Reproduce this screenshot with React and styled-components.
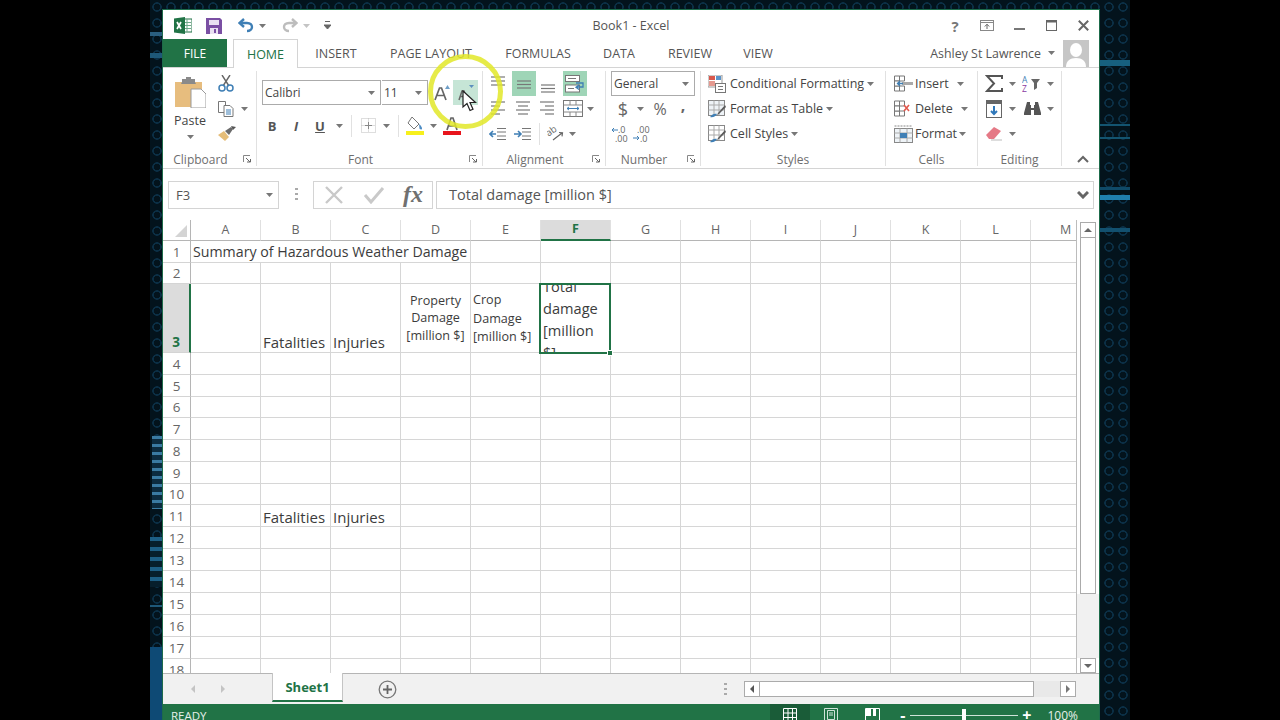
import React from "react";
import styled, { createGlobalStyle } from "styled-components";

const GlobalStyle = createGlobalStyle`
    html, body { margin: 0; padding: 0; background: #000; }
    * { box-sizing: border-box; }
`;

const GREEN = "#217346";
const UI = `"Open Sans", "Noto Sans", sans-serif`;

const Page = styled.div`
    width: 1280px;
    height: 720px;
    overflow: hidden;
    padding: 0 150px;
    background: #000;
    font-family: ${UI};
`;

const Desktop = styled.div`
    height: 720px;
    padding: 9px 30px 0 12px;
    background:
        linear-gradient(#2a5f80, #2a5f80) 0 32px / 12px 4px no-repeat,
        linear-gradient(#1e5878, #1e5878) 0 53px / 12px 5px no-repeat,
        repeating-linear-gradient(#3a7ba3 0 3px, #0c2c40 3px 8px) 2px 436px / 10px 73px no-repeat,
        repeating-linear-gradient(#1d5f85 0 4px, #071f2c 4px 10px) 0 537px / 12px 50px no-repeat,
        linear-gradient(#1e5878, #1e5878) 0 605px / 12px 2px no-repeat,
        linear-gradient(#0e4a75, #0e4a75) 0 647px / 12px 73px no-repeat,
        linear-gradient(#17607f, #17607f) 950px 60px / 30px 6px no-repeat,
        linear-gradient(#135470, #135470) 950px 124px / 30px 2px no-repeat,
        linear-gradient(#135470, #135470) 950px 137px / 30px 2px no-repeat,
        linear-gradient(#0f4a68, #0f4a68) 950px 187px / 30px 3px no-repeat,
        linear-gradient(#1f7fae, #1f7fae) 950px 195px / 30px 5px no-repeat,
        linear-gradient(#12506f, #12506f) 950px 228px / 30px 4px no-repeat,
        radial-gradient(circle at 7px 7px, transparent 3px, #0b2f45 3.5px, #0b2f45 4.5px, transparent 5px) 0 0 / 14px 16px,
        #03131c;
`;

const Window = styled.div`
    position: relative;
    display: flex;
    flex-direction: column;
    width: 938px;
    height: 730px;
    background: #fff;
    border: 1px solid #1d6b4a;
    border-bottom: 0;
`;

const TitleBar = styled.div`
    display: grid;
    grid-template-columns: 1fr auto 1fr;
    align-items: center;
    height: 29px;
    padding-top: 2px;
    flex: none;
`;

const QuickAccess = styled.div`
    display: flex;
    align-items: center;
    padding-left: 11px;
`;

const WindowTitle = styled.div`
    font-size: 12.5px;
    color: #555;
`;

const WindowButtons = styled.div`
    display: flex;
    justify-content: flex-end;
`;

const Slot = styled.div`
    display: flex;
    flex: none;
    align-items: center;
    justify-content: center;
    width: ${(p) => p.$w}px;
    height: ${(p) => p.$h || 25}px;
    margin-left: ${(p) => p.$ml || 0}px;
    background: ${(p) => p.$bg || "transparent"};
`;

const TabBar = styled.div`
    display: flex;
    align-items: stretch;
    height: 29px;
    flex: none;
    border-bottom: 1px solid #d4d4d4;
`;

const FileTab = styled.div`
    display: flex;
    align-items: center;
    justify-content: center;
    width: 64px;
    margin-right: 6px;
    background: ${GREEN};
    color: #fff;
    font-size: 12px;
`;

const Tab = styled.div`
    display: flex;
    align-items: center;
    justify-content: center;
    width: ${(p) => p.$w}px;
    font-size: 12.5px;
    color: ${(p) => (p.$active ? GREEN : "#555")};
    background: #fff;
    ${(p) => p.$active && `
        border: 1px solid #d4d4d4;
        border-bottom: 0;
        margin-bottom: -1px;
    `}
`;

const UserBox = styled.div`
    display: flex;
    align-items: center;
    margin-left: auto;
    padding-right: 10px;
    font-size: 12.4px;
    color: #555;
`;

const Avatar = styled.div`
    width: 26px;
    height: 27px;
    margin-left: 7px;
    background: #c6c6c6;
    overflow: hidden;
`;

const Ribbon = styled.div`
    display: flex;
    height: 101px;
    flex: none;
    border-bottom: 1px solid #d4d4d4;
    padding: 3px 0 2px;
    background: #fff;
`;

const GroupBox = styled.div`
    display: flex;
    flex: none;
    flex-direction: column;
    width: ${(p) => p.$w}px;
    border-right: 1px solid #e1e1e1;
`;

const GroupBody = styled.div`
    flex: 1;
    display: flex;
    flex-direction: ${(p) => (p.$row ? "row" : "column")};
    padding-left: ${(p) => p.$pad || 0}px;
`;

const GroupFoot = styled.div`
    display: flex;
    align-items: center;
    height: 19px;
    padding-top: 5px;
    font-size: 12px;
    color: #6e6e6e;
`;

const GroupLabel = styled.div`
    flex: 1;
    text-align: center;
`;

const Row = styled.div`
    display: flex;
    align-items: center;
    height: 25px;
    margin-top: ${(p) => p.$mt || 0}px;
    padding-left: ${(p) => p.$pl || 0}px;
    font-size: 12.5px;
    color: #444;
`;

const Column = styled.div`
    display: flex;
    flex-direction: column;
    align-items: center;
    width: ${(p) => p.$w}px;
`;

const PasteLabel = styled.div`
    font-size: 12.5px;
    color: #444;
    line-height: 16px;
    margin-bottom: 6px;
`;

const ComboBox = styled.div`
    display: flex;
    align-items: center;
    justify-content: space-between;
    width: ${(p) => p.$w}px;
    height: 25px;
    margin-left: ${(p) => p.$ml || 0}px;
    padding: 0 5px 0 2px;
    border: 1px solid #ababab;
    ${(p) => p.$joined && "border-left: 0;"}
    font-size: 12px;
    color: #444;
`;

const Sep = styled.div`
    width: 1px;
    height: 22px;
    background: #e1e1e1;
`;

const RowText = styled.span`
    margin-left: ${(p) => p.$ml || 4}px;
    white-space: nowrap;
`;

const FormulaBar = styled.div`
    display: flex;
    align-items: center;
    height: 51px;
    flex: none;
    padding-left: 5px;
`;

const NameBox = styled.div`
    display: flex;
    align-items: center;
    justify-content: space-between;
    width: 111px;
    height: 28px;
    padding: 0 5px 0 7px;
    border: 1px solid #d4d4d4;
    font-size: 13px;
    color: #555;
`;

const DotsSlot = styled.div`
    display: flex;
    justify-content: center;
    width: 34px;
`;

const FxBox = styled.div`
    display: flex;
    align-items: center;
    width: 120px;
    height: 28px;
    border: 1px solid #d4d4d4;
`;

const FormulaInput = styled.div`
    display: flex;
    align-items: center;
    justify-content: space-between;
    width: 658px;
    height: 28px;
    margin-left: 3px;
    padding: 0 2px 0 12px;
    border: 1px solid #d4d4d4;
    font-size: 14.5px;
    color: #555;
`;

const FxText = styled.span`
    font-family: "Liberation Serif", serif;
    font-style: italic;
    font-weight: 700;
    font-size: 24px;
    color: #707070;
`;

const WorkArea = styled.div`
    display: flex;
    height: 453px;
    flex: none;
`;

const Sheet = styled.div`
    display: grid;
    grid-template-columns: 28px repeat(13, 70px);
    grid-template-rows: 21px ${(p) => p.$rows};
    width: 914px;
    height: 453px;
    overflow: hidden;
    border-right: 1px solid #bcbcbc;
`;

const Corner = styled.div`
    display: flex;
    align-items: flex-end;
    justify-content: flex-end;
    padding: 0 3px 3px 0;
    border-right: 1px solid #b5b5b5;
    border-bottom: 1px solid #b5b5b5;
`;

const ColHead = styled.div`
    display: flex;
    align-items: center;
    justify-content: center;
    padding-bottom: 2px;
    font-size: 12.5px;
    color: ${(p) => (p.$on ? GREEN : "#666")};
    font-weight: ${(p) => (p.$on ? 700 : 400)};
    background: ${(p) => (p.$on ? "#dcdcdc" : "#fff")};
    border-right: 1px solid #e0e0e0;
    border-bottom: ${(p) => (p.$on ? `2px solid ${GREEN}` : "1px solid #b5b5b5")};
`;

const RowHead = styled.div`
    display: flex;
    align-items: ${(p) => (p.$on ? "flex-end" : "center")};
    justify-content: center;
    padding-bottom: ${(p) => (p.$on ? 1 : 0)}px;
    font-size: 13.5px;
    color: ${(p) => (p.$on ? GREEN : "#666")};
    font-weight: ${(p) => (p.$on ? 700 : 400)};
    background: ${(p) => (p.$on ? "#dcdcdc" : "#fff")};
    border-right: ${(p) => (p.$on ? `2px solid ${GREEN}` : "1px solid #b5b5b5")};
    border-bottom: 1px solid #d4d4d4;
`;

const Cell = styled.div`
    position: relative;
    display: flex;
    min-width: 0;
    align-items: ${(p) => p.$v || "flex-end"};
    padding: 0 2px ${(p) => p.$pb || 0}px;
    border-right: ${(p) => (p.$over ? "0" : "1px solid #d6d6d6")};
    border-bottom: 1px solid #d6d6d6;
    font-size: ${(p) => p.$s || 15}px;
    line-height: 18px;
    color: #3c3c3c;
    white-space: nowrap;
    z-index: ${(p) => (p.$top ? 2 : "auto")};
`;

const SmallText = styled.div`
    width: 100%;
    font-size: 12.6px;
    line-height: ${(p) => p.$lh}px;
    text-align: ${(p) => p.$align || "left"};
    padding-top: ${(p) => p.$pt || 0}px;
`;

const Selection = styled.div`
    position: absolute;
    inset: -1px -1px -2px -2px;
    border: 2px solid ${GREEN};
    background: #fff;
    overflow: hidden;
    display: flex;
    align-items: center;
    padding-left: 2px;
    font-size: 14.6px;
    line-height: 22px;
    white-space: normal;
`;

const FillHandle = styled.div`
    position: absolute;
    right: -3px;
    bottom: -4px;
    width: 6px;
    height: 6px;
    background: ${GREEN};
    border: 1px solid #fff;
`;

const VScroll = styled.div`
    display: flex;
    flex-direction: column;
    flex: 1;
    padding: 2px 3px 0 3px;
    background: #fff;
`;

const ScrollBtn = styled.div`
    display: flex;
    align-items: center;
    justify-content: center;
    flex: none;
    width: ${(p) => p.$w || 16}px;
    height: ${(p) => p.$h || 16}px;
    background: #fff;
    border: 1px solid #ababab;
`;

const VThumb = styled.div`
    width: 16px;
    height: 356px;
    flex: none;
    background: #fff;
    border: 1px solid #ababab;
    border-top: 0;
`;

const VTrack = styled.div`
    flex: 1;
    margin: 0 -3px;
    background: #f1f1f1;
`;

const HTrack = styled.div`
    flex: 1;
`;

const SheetBar = styled.div`
    display: flex;
    align-items: center;
    height: 31px;
    flex: none;
    background: #f1f1f1;
    border-top: 1px solid #b5b5b5;
    padding-left: 15px;
`;

const SheetTab = styled.div`
    display: flex;
    align-items: center;
    justify-content: center;
    align-self: flex-start;
    width: 71px;
    height: 29px;
    margin-top: -1px;
    margin-left: 34px;
    background: #fff;
    border: 1px solid #c4c4c4;
    border-top: 0;
    border-bottom: 2px solid ${GREEN};
    font-size: 13px;
    font-weight: 700;
    color: ${GREEN};
`;

const HScroll = styled.div`
    display: flex;
    width: 332px;
    height: 16px;
    margin-left: 17px;
    background: #e9e9e9;
`;

const HThumb = styled.div`
    width: 274px;
    background: #fff;
    border: 1px solid #ababab;
    border-left: 0;
`;

const StatusBar = styled.div`
    display: flex;
    align-items: center;
    height: 22px;
    flex: none;
    background: ${GREEN};
    color: #e6f0ea;
    font-size: 11.5px;
    padding-left: 8px;
`;

const StatusRight = styled.div`
    display: flex;
    align-items: center;
    margin-left: auto;
    padding-right: 21px;
`;

const ViewButton = styled.div`
    display: flex;
    align-items: center;
    justify-content: center;
    width: ${(p) => p.$w}px;
    height: 22px;
    background: ${(p) => (p.$on ? "#1a5c38" : "transparent")};
`;

const ZoomTrack = styled.div`
    position: relative;
    width: 108px;
    height: 1px;
    background: #cfe3d8;
`;

const ZoomThumb = styled.div`
    position: absolute;
    left: 52px;
    top: -6px;
    width: 4px;
    height: 13px;
    background: #fff;
`;

const ZoomText = styled.span`
    margin-left: 11px;
    font-size: 12px;
`;

const ZoomSign = styled.span`
    font-size: 16px;
    font-weight: 700;
    line-height: 16px;
    color: #fff;
    margin-left: ${(p) => p.$ml}px;
    margin-right: ${(p) => p.$mr}px;
`;

const HelpGlyph = styled.span`
    font-size: 15px;
    font-weight: 700;
    color: #777;
`;

const BoldLetter = styled.span`
    font-size: 13px;
    font-weight: 700;
    color: #555;
    font-style: ${(p) => (p.$i ? "italic" : "normal")};
    text-decoration: ${(p) => (p.$u ? "underline" : "none")};
`;

const MoneyText = styled.span`
    font-size: ${(p) => p.$s || 16}px;
    line-height: 16px;
    color: #666;
    font-weight: ${(p) => p.$w || 400};
    margin-bottom: ${(p) => p.$up || 0}px;
`;

const Highlighter = styled.div`
    position: absolute;
    left: 265px;
    top: 44px;
    width: 75px;
    height: 75px;
    border: 5px solid rgba(226, 232, 40, 0.85);
    border-radius: 50%;
    pointer-events: none;
`;

const Pointer = styled.svg`
    position: absolute;
    left: 299px;
    top: 80px;
`;

const Ico = styled.svg`
    display: block;
    flex: none;
    margin-left: ${(p) => p.$ml || 0}px;
    transform: ${(p) => p.$tf || "none"};
`;

const Caret = ({ color = "#777", ml = 0 }) => (
    <Ico width="7" height="4" viewBox="0 0 7 4" $ml={ml}>
        <path d="M0 0h7L3.500 4z" fill={color} />
    </Ico>
);

const Launcher = () => (
    <Ico width="8" height="8" viewBox="0 0 8 8">
        <path d="M.5 7V.5H7" fill="none" stroke="#888" />
        <path d="M3 3l4 4M4 7h3.500V4" fill="none" stroke="#666" />
    </Ico>
);

const ExcelLogo = () => (
    <Ico width="18" height="17" viewBox="0 0 18 17">
        <rect x="8" y="2" width="10" height="13" fill="#fff" stroke="#217346" />
        <path d="M10 5.500h7M10 8.500h7M10 11.500h7M13 2v13" stroke="#6fa98a" />
        <path d="M0 1.500l11-1.500v17l-11-1.500z" fill="#217346" />
        <path d="M3 5l4 7M7 5l-4 7" stroke="#fff" strokeWidth="1.700" />
    </Ico>
);

const SaveIcon = () => (
    <Ico width="16" height="16" viewBox="0 0 16 16">
        <path d="M0 0h14l2 2v14H0z" fill="#7a4fa3" />
        <rect x="3" y="2" width="10" height="5" fill="#e9e1f1" />
        <rect x="4" y="10" width="8" height="6" fill="#e9e1f1" />
        <rect x="8" y="11" width="2" height="4" fill="#7a4fa3" />
    </Ico>
);

const UndoIcon = ({ color = "#3f7fb5", flip }) => (
    <Ico width="16" height="15" viewBox="0 0 16 15" $tf={flip ? "scaleX(-1)" : undefined}>
        <path d="M6 1L1.500 5 6 9" fill="none" stroke={color} strokeWidth="2.400" />
        <path d="M2 5h7c3.500 0 5 2 5 4s-2 4-5 4" fill="none" stroke={color} strokeWidth="2.400" />
    </Ico>
);

const CustomizeIcon = () => (
    <Ico width="7" height="9" viewBox="0 0 7 9">
        <path d="M1 .5h5M0 4h7L3.500 8z" stroke="#666" fill="#666" />
    </Ico>
);

const DisplayIcon = () => (
    <Ico width="14" height="11" viewBox="0 0 14 11">
        <rect x=".5" y=".5" width="13" height="10" fill="none" stroke="#888" />
        <path d="M1 2.500h12" stroke="#888" />
        <path d="M7 9V4.500M4.800 6.500L7 4.200l2.200 2.300" fill="none" stroke="#666" />
    </Ico>
);

const MinIcon = () => (
    <Ico width="11" height="11" viewBox="0 0 11 11">
        <rect y="8" width="11" height="2" fill="#777" />
    </Ico>
);

const MaxIcon = () => (
    <Ico width="11" height="11" viewBox="0 0 11 11">
        <rect x=".5" y=".5" width="10" height="10" fill="none" stroke="#666" />
        <rect width="11" height="2.500" fill="#666" />
    </Ico>
);

const CloseIcon = () => (
    <Ico width="11" height="11" viewBox="0 0 11 11">
        <path d="M.8.8l9.400 9.400M10.200.8L.8 10.200" stroke="#666" strokeWidth="2" />
    </Ico>
);

const AvatarFigure = () => (
    <Ico width="26" height="27" viewBox="0 0 26 27">
        <ellipse cx="13" cy="10" rx="6" ry="7" fill="#fff" />
        <path d="M3 27c0-6 4-9 10-9s10 3 10 9z" fill="#fff" />
    </Ico>
);

const PasteIcon = () => (
    <Ico width="31" height="31" viewBox="0 0 31 31">
        <rect x="0" y="5" width="27" height="25" fill="#e7bd7e" />
        <path d="M7 5V2h4V0h5v2h4v3l1 2H6z" fill="#8a8a8a" />
        <path d="M16 12h10l5 5v14H16z" fill="#fff" stroke="#9a9a9a" />
    </Ico>
);

const CutIcon = () => (
    <Ico width="16" height="17" viewBox="0 0 16 17">
        <path d="M4 0l7 11M12 0L5 11" stroke="#666" strokeWidth="1.400" />
        <circle cx="4" cy="13" r="3" fill="none" stroke="#3f7fb5" strokeWidth="1.500" />
        <circle cx="12" cy="13" r="3" fill="none" stroke="#3f7fb5" strokeWidth="1.500" />
    </Ico>
);

const CopyIcon = () => (
    <Ico width="16" height="16" viewBox="0 0 16 16">
        <path d="M.5.5h7v11h-7z" fill="#fff" stroke="#777" />
        <path d="M6 4.500h6l3 3v8H6z" fill="#fff" stroke="#777" />
        <path d="M8 9h5M8 11h5M8 13h5" stroke="#3f7fb5" />
    </Ico>
);

const PainterIcon = () => (
    <Ico width="18" height="15" viewBox="0 0 18 15">
        <path d="M0 9l6-4 5 6-4 4z" fill="#e5bd78" />
        <path d="M7 5l6-4 2 2-4 6z" fill="#6b6b6b" />
        <path d="M13 0l5 1-3 3z" fill="#555" />
    </Ico>
);

const GrowFont = () => (
    <Ico width="16" height="16" viewBox="0 0 16 16">
        <path d="M1 15L5.500 3h2L12 15M3 10.500h7" fill="none" stroke="#666" strokeWidth="1.700" />
        <path d="M11 4h5L13.500 0z" fill="#6f9fc8" />
    </Ico>
);

const ShrinkFont = () => (
    <Ico width="20" height="18" viewBox="0 0 20 18">
        <path d="M13 1h5l-2.500 3z" fill="#5c8fbe" />
        <path d="M3 16l3-9h2l3 9M4.500 12.500h5" fill="none" stroke="#666" strokeWidth="1.500" />
    </Ico>
);

const BorderIcon = () => (
    <Ico width="15" height="15" viewBox="0 0 15 15">
        <path d="M.5.5h14v14H.5zM7.500.5v14M.5 7.500h14" fill="none" stroke="#bdbdbd" strokeDasharray="1 1" />
        <path d="M4 7.500h7M7.500 4v7" stroke="#888" />
    </Ico>
);

const FillIcon = () => (
    <Ico width="18" height="19" viewBox="0 0 18 19">
        <path d="M6 1l7 7-5 5-6-6z" fill="#fff" stroke="#777" />
        <path d="M13 8c2 2 3 3 3 4.500s-2 1-2.500 0z" fill="#4d8cc4" />
        <rect y="15" width="18" height="4" fill="#f7f01c" />
    </Ico>
);

const ColorIcon = () => (
    <Ico width="18" height="19" viewBox="0 0 18 19">
        <path d="M4 14L8 2h2l4 12M5.500 10h7" fill="none" stroke="#666" strokeWidth="1.700" />
        <rect y="15" width="18" height="4" fill="#e8141c" />
    </Ico>
);

const Lines = ({ ys, xs, w = 16, h = 18 }) => (
    <Ico width={w} height={h} viewBox={`0 0 ${w} ${h}`}>
        {ys.map((y, i) => (
            <path key={i} d={`M${xs ? xs[i][0] : 1} ${y}H${xs ? xs[i][1] : w - 1}`} stroke="#777" strokeWidth="1.200" />
        ))}
    </Ico>
);

const WrapIcon = () => (
    <Ico width="20" height="18" viewBox="0 0 20 18">
        <rect x=".5" y=".5" width="14" height="6" fill="#fff" stroke="#777" />
        <rect x=".5" y="10" width="14" height="7" fill="#fff" stroke="#777" />
        <path d="M3 3.500h8M3 13.500h6" stroke="#777" />
        <path d="M11 8h7v4h-6M14 10l-3 2.300 3 2.200" fill="none" stroke="#3f7fb5" strokeWidth="1.300" />
    </Ico>
);

const MergeIcon = () => (
    <Ico width="20" height="17" viewBox="0 0 20 17">
        <rect x=".5" y=".5" width="19" height="16" fill="#fff" stroke="#777" />
        <path d="M.5 5h19M.5 12h19M7 .5V5M13 .5V5M7 12v4.500M13 12v4.500" stroke="#888" />
        <path d="M4 8.500h12M6 7L4 8.500 6 10M14 7l2 1.500L14 10" fill="none" stroke="#3f7fb5" />
    </Ico>
);

const IndentIcon = ({ flip }) => (
    <Ico width="18" height="14" viewBox="0 0 18 14">
        <path d="M8 1.500h9M8 5h9M8 9h9M8 12.500h9" stroke="#777" />
        {flip ? (
            <path d="M0 7h7M4 4l3 3-3 3" fill="none" stroke="#3f7fb5" strokeWidth="1.600" />
        ) : (
            <path d="M7 7H1M4 4L1 7l3 3" fill="none" stroke="#3f7fb5" strokeWidth="1.600" />
        )}
    </Ico>
);

const OrientIcon = () => (
    <Ico width="18" height="17" viewBox="0 0 18 17">
        <text x="0" y="9" fontSize="9.500" fill="#666" fontFamily="Open Sans" transform="rotate(-35 5 8)">ab</text>
        <path d="M6 15l9-7M12 7.500l3.500.3-.5 3.500" fill="none" stroke="#666" strokeWidth="1.200" />
    </Ico>
);

const DecimalIcon = ({ dir }) => (
    <Ico width="18" height="18" viewBox="0 0 18 18">
        <text x={dir ? 5 : 6} y="8" fontSize="9" fill="#666" fontFamily="Open Sans">{dir ? ".00" : ".0"}</text>
        <text x={dir ? 8 : 3} y="16.500" fontSize="9" fill="#666" fontFamily="Open Sans">{dir ? ".0" : ".00"}</text>
        <path d={dir ? "M1 13h6M5 11l2 2-2 2" : "M0 5h6M2 3L0 5l2 2"} fill="none" stroke="#3f7fb5" />
    </Ico>
);

const CondIcon = () => (
    <Ico width="18" height="18" viewBox="0 0 18 18">
        <rect x="0" y="0" width="14" height="12" fill="#fff" stroke="#999" />
        <rect x="1" y="1" width="6" height="4" fill="#d8584c" />
        <rect x="8" y="1" width="5" height="4" fill="#5b93c8" />
        <rect x="1" y="6" width="6" height="5" fill="#e59a90" />
        <rect x="7.500" y="8.500" width="10" height="9" fill="#fff" stroke="#777" />
        <path d="M10 11.500h5M10 14.500h5" stroke="#777" />
    </Ico>
);

const TableIcon = ({ solid }) => (
    <Ico width="18" height="18" viewBox="0 0 18 18">
        <rect x=".5" y=".5" width="16" height="15" fill={solid ? "#fff" : "#eef3f7"} stroke="#888" />
        <path d="M.5 5h16M.5 10h16M6 .5v15M11 .5v15" stroke="#aaa" />
        <path d="M17 5l-7 8-1 2 2-1 7-7z" fill="#5b5b5b" />
        <path d="M2 17c2-3 5-4 7-3-1 2-4 4-7 3z" fill="#3f7fb5" />
    </Ico>
);

const CellsIcon = ({ kind }) => (
    <Ico width="20" height="18" viewBox="0 0 20 18">
        <path d="M.5 1h5v5h-5zM5.500 1h5v5h-5zM.5 11h5v5h-5zM5.500 11h5v5h-5z" fill="#fff" stroke="#777" />
        <path d="M.5 6h5v5h-5z" fill="#fff" stroke="#777" />
        {kind === "insert" ? (
            <g>
                <path d="M8 8.500h11" stroke="#aaa" strokeWidth="3" />
                <path d="M9 8.500H4M6 6L3.500 8.500 6 11" fill="none" stroke="#3f7fb5" strokeWidth="1.300" />
            </g>
        ) : (
            <path d="M10 5l5 6M15 5l-5 6" stroke="#e2574c" strokeWidth="1.600" />
        )}
    </Ico>
);

const FormatIcon = () => (
    <Ico width="20" height="18" viewBox="0 0 20 18">
        <rect x=".5" y="3.500" width="18" height="14" fill="#eef3f7" stroke="#888" />
        <path d="M.5 1h18" stroke="#888" strokeDasharray="2 1" />
        <path d="M6 3.500v14M13 3.500v14M.5 8h18M.5 13h18" stroke="#aaa" />
        <rect x="6" y="8" width="7" height="5" fill="#3f7fb5" />
    </Ico>
);

const SigmaIcon = () => (
    <Ico width="18" height="17" viewBox="0 0 18 17">
        <path d="M17 4V1H2l7 7.500L2 16h15v-3" fill="none" stroke="#555" strokeWidth="2" />
    </Ico>
);

const SortIcon = () => (
    <Ico width="20" height="17" viewBox="0 0 20 17">
        <text x="0" y="7.500" fontSize="8.500" fill="#3f7fb5" fontFamily="Open Sans">A</text>
        <text x="0" y="16.500" fontSize="8.500" fill="#8a3aa0" fontFamily="Open Sans">Z</text>
        <path d="M9 4h9l-3 4v5l-3 2V8z" fill="#666" />
    </Ico>
);

const FillDown = () => (
    <Ico width="16" height="18" viewBox="0 0 16 18">
        <rect x=".5" y=".5" width="15" height="17" fill="#fff" stroke="#666" />
        <rect width="16" height="4" fill="#666" />
        <path d="M8 6v8M5 11l3 3 3-3" fill="none" stroke="#2f78ba" strokeWidth="2" />
    </Ico>
);

const FindIcon = () => (
    <Ico width="17" height="15" viewBox="0 0 17 15">
        <path d="M3 1h3v3h1v3h3V4h1V1h3l3 11v2h-7V9H7v5H0v-2z" fill="#555" />
    </Ico>
);

const EraserIcon = () => (
    <Ico width="16" height="15" viewBox="0 0 16 15">
        <path d="M0 9l8-8 7 4-7 8H3z" fill="#e57986" />
        <path d="M5 14h11" stroke="#bbb" />
    </Ico>
);

const Chevron = ({ dir = "up" }) => (
    <Ico width="12" height="8" viewBox="0 0 12 8" $tf={dir === "down" ? "rotate(180deg)" : undefined}>
        <path d="M1 7l5-5 5 5" fill="none" stroke="#666" strokeWidth={dir === "down" ? 3 : 2} />
    </Ico>
);

const Arrow = ({ dir, color = "#666", s = 8 }) => {
    const d = {
        up: "M0 6h8L4 2z",
        down: "M0 2h8L4 6z",
        left: "M6 0v8L2 4z",
        right: "M2 0v8l4-4z",
    }[dir];
    return (
        <Ico width={s} height={s} viewBox="0 0 8 8">
            <path d={d} fill={color} />
        </Ico>
    );
};

const DotsIcon = () => (
    <Ico width="3" height="13" viewBox="0 0 3 13">
        <path d="M0 0h3v2H0zM0 5h3v2H0zM0 10h3v2H0z" fill="#aaa" />
    </Ico>
);

const CancelIcon = () => (
    <Ico width="20" height="20" viewBox="0 0 20 20">
        <path d="M2 2l16 16M18 2L2 18" stroke="#c9c9c9" strokeWidth="2.400" />
    </Ico>
);

const CheckIcon = () => (
    <Ico width="22" height="18" viewBox="0 0 22 18">
        <path d="M2 9l6 7L20 2" fill="none" stroke="#c9c9c9" strokeWidth="3" />
    </Ico>
);

const CornerMark = () => (
    <Ico width="12" height="12" viewBox="0 0 12 12">
        <path d="M12 0v12H0z" fill="#d4d4d4" />
    </Ico>
);

const PlusCircle = () => (
    <Ico width="19" height="19" viewBox="0 0 19 19">
        <circle cx="9.500" cy="9.500" r="8.300" fill="none" stroke="#777" strokeWidth="1.300" />
        <path d="M5 9.500h9M9.500 5v9" stroke="#666" strokeWidth="1.800" />
    </Ico>
);

const ViewGrid = () => (
    <Ico width="14" height="14" viewBox="0 0 14 14">
        <path d="M.5.5h13v13H.5zM5 .5v13M9.500 .5v13M.5 5h13M.5 9.500h13" fill="none" stroke="#fff" />
    </Ico>
);

const ViewPage = () => (
    <Ico width="14" height="14" viewBox="0 0 14 14">
        <path d="M.5.5h13v13H.5z" fill="none" stroke="#cfe3d8" />
        <path d="M3.500 2.500h7v9h-7zM5 5h4M5 7h4" fill="none" stroke="#cfe3d8" />
    </Ico>
);

const ViewBreak = () => (
    <Ico width="15" height="14" viewBox="0 0 15 14">
        <path d="M.5.5h14v13H.5z" fill="none" stroke="#fff" />
        <rect x="1" y="1" width="5" height="7" fill="#fff" />
        <rect x="8" y="1" width="3" height="7" fill="#fff" />
    </Ico>
);

const Group = ({ w, label, launcher, pad, row, children }) => (
    <GroupBox $w={w}>
        <GroupBody $pad={pad} $row={row}>{children}</GroupBody>
        <GroupFoot>
            <GroupLabel>{label}</GroupLabel>
            {launcher && <Slot $w={18} $h={14}><Launcher /></Slot>}
        </GroupFoot>
    </GroupBox>
);

const TABS = [
    ["HOME", 65, true],
    ["INSERT", 76],
    ["PAGE LAYOUT", 114],
    ["FORMULAS", 100],
    ["DATA", 62],
    ["REVIEW", 80],
    ["VIEW", 56],
];

const COLUMNS = "ABCDEFGHIJKLM".split("");
const ROW_HEIGHTS = [22, 21, 69, 22, 22, 21, 22, 22, 22, 21, 22, 22, 22, 22, 22, 22, 22, 22];

const renderCell = (col, row) => {
    const id = col + row;
    switch (id) {
        case "A1":
            return <Cell key={id} $over $s={14.2} $pb={1}>Summary of Hazardous Weather Damage</Cell>;
        case "B1":
        case "C1":
            return <Cell key={id} $over />;
        case "B3":
            return <Cell key={id} $pb={1}>Fatalities</Cell>;
        case "C3":
            return <Cell key={id} $pb={1}>Injuries</Cell>;
        case "B11":
            return <Cell key={id}>Fatalities</Cell>;
        case "C11":
            return <Cell key={id}>Injuries</Cell>;
        case "D3":
            return (
                <Cell key={id} $v="center">
                    <SmallText $align="center" $lh={17.5}>Property<br />Damage<br />[million $]</SmallText>
                </Cell>
            );
        case "E3":
            return (
                <Cell key={id} $v="center">
                    <SmallText $lh={18.5} $pt={2}>Crop<br />Damage<br />[million $]</SmallText>
                </Cell>
            );
        case "F3":
            return (
                <Cell key={id} $top>
                    <Selection>Total damage [million $]</Selection>
                    <FillHandle />
                </Cell>
            );
        default:
            return <Cell key={id} />;
    }
};

const App = () => (
    <Page>
        <GlobalStyle />
        <Desktop>
            <Window>
                <TitleBar>
                    <QuickAccess>
                        <ExcelLogo />
                        <Slot $w={16} $ml={14}><SaveIcon /></Slot>
                        <Slot $w={16} $ml={16}><UndoIcon /></Slot>
                        <Slot $w={12} $ml={2}><Caret /></Slot>
                        <Slot $w={16} $ml={14}><UndoIcon color="#bdbdbd" flip /></Slot>
                        <Slot $w={12} $ml={2}><Caret color="#c4c4c4" /></Slot>
                        <Slot $w={8} $ml={11}><CustomizeIcon /></Slot>
                    </QuickAccess>
                    <WindowTitle>Book1 - Excel</WindowTitle>
                    <WindowButtons>
                        <Slot $w={32}><HelpGlyph>?</HelpGlyph></Slot>
                        <Slot $w={32}><DisplayIcon /></Slot>
                        <Slot $w={32}><MinIcon /></Slot>
                        <Slot $w={32}><MaxIcon /></Slot>
                        <Slot $w={32}><CloseIcon /></Slot>
                    </WindowButtons>
                </TitleBar>
                <TabBar>
                    <FileTab>FILE</FileTab>
                    {TABS.map(([name, w, active]) => (
                        <Tab key={name} $w={w} $active={active}>{name}</Tab>
                    ))}
                    <UserBox>
                        Ashley St Lawrence
                        <Slot $w={10} $ml={5}><Caret /></Slot>
                        <Avatar><AvatarFigure /></Avatar>
                    </UserBox>
                </TabBar>
                <Ribbon>
                    <Group w={94} label="Clipboard" launcher row>
                        <Column $w={54}>
                            <Slot $w={54} $h={42}><PasteIcon /></Slot>
                            <PasteLabel>Paste</PasteLabel>
                            <Caret />
                        </Column>
                        <div>
                            <Row><Slot $w={18}><CutIcon /></Slot></Row>
                            <Row><Slot $w={18}><CopyIcon /></Slot><Slot $w={8} $ml={5}><Caret /></Slot></Row>
                            <Row><Slot $w={20}><PainterIcon /></Slot></Row>
                        </div>
                    </Group>
                    <Group w={226} label="Font" launcher>
                        <Row $mt={9}>
                            <ComboBox $w={119} $ml={5}>Calibri<Caret /></ComboBox>
                            <ComboBox $w={46} $joined $ml={1}>11<Caret /></ComboBox>
                            <Slot $w={20} $ml={4}><GrowFont /></Slot>
                            <Slot $w={25} $ml={1} $bg="#c6e5d6"><ShrinkFont /></Slot>
                        </Row>
                        <Row $mt={8} $pl={3}>
                            <Slot $w={24}><BoldLetter>B</BoldLetter></Slot>
                            <Slot $w={24}><BoldLetter $i>I</BoldLetter></Slot>
                            <Slot $w={24}><BoldLetter $u>U</BoldLetter></Slot>
                            <Slot $w={14}><Caret /></Slot>
                            <Slot $w={10}><Sep /></Slot>
                            <Slot $w={24}><BorderIcon /></Slot>
                            <Slot $w={12}><Caret /></Slot>
                            <Slot $w={12}><Sep /></Slot>
                            <Slot $w={22}><FillIcon /></Slot>
                            <Slot $w={14}><Caret /></Slot>
                            <Slot $w={24}><ColorIcon /></Slot>
                        </Row>
                    </Group>
                    <Group w={123} label="Alignment" launcher pad={3}>
                        <Row>
                            <Slot $w={24}><Lines ys={[2, 6, 10]} /></Slot>
                            <Slot $w={24} $ml={2} $bg="#9fd5b7"><Lines ys={[6, 9.5, 13]} /></Slot>
                            <Slot $w={24}><Lines ys={[11, 14.5, 18]} h={19} /></Slot>
                            <Slot $w={24} $ml={3} $bg="#9fd5b7"><WrapIcon /></Slot>
                        </Row>
                        <Row>
                            <Slot $w={24}><Lines ys={[2, 6, 10, 14]} xs={[[1, 15], [1, 10], [1, 15], [1, 10]]} /></Slot>
                            <Slot $w={25}><Lines ys={[2, 6, 10, 14]} xs={[[1, 15], [3, 13], [1, 15], [3, 13]]} /></Slot>
                            <Slot $w={24}><Lines ys={[2, 6, 10, 14]} xs={[[1, 15], [6, 15], [1, 15], [6, 15]]} /></Slot>
                            <Slot $w={24} $ml={2}><MergeIcon /></Slot>
                            <Slot $w={10}><Caret /></Slot>
                        </Row>
                        <Row>
                            <Slot $w={24}><IndentIcon /></Slot>
                            <Slot $w={25}><IndentIcon flip /></Slot>
                            <Slot $w={8}><Sep /></Slot>
                            <Slot $w={26}><OrientIcon /></Slot>
                            <Slot $w={6}><Caret /></Slot>
                        </Row>
                    </Group>
                    <Group w={95} label="Number" launcher pad={5}>
                        <Row>
                            <ComboBox $w={84}>General<Caret /></ComboBox>
                        </Row>
                        <Row>
                            <Slot $w={24}><MoneyText $s={18}>$</MoneyText></Slot>
                            <Slot $w={10}><Caret /></Slot>
                            <Slot $w={30}><MoneyText>%</MoneyText></Slot>
                            <Slot $w={16}><MoneyText $w={700} $up={8}>,</MoneyText></Slot>
                        </Row>
                        <Row>
                            <Slot $w={20}><DecimalIcon /></Slot>
                            <Slot $w={20}><DecimalIcon dir /></Slot>
                        </Row>
                    </Group>
                    <Group w={185} label="Styles" pad={7}>
                        <Row><CondIcon /><RowText>Conditional Formatting</RowText><Caret ml={3} /></Row>
                        <Row><TableIcon /><RowText>Format as Table</RowText><Caret ml={3} /></Row>
                        <Row><TableIcon solid /><RowText>Cell Styles</RowText><Caret ml={3} /></Row>
                    </Group>
                    <Group w={92} label="Cells" pad={8}>
                        <Row><CellsIcon kind="insert" /><RowText $ml={1}>Insert</RowText><Caret ml={8} /></Row>
                        <Row><CellsIcon kind="delete" /><RowText $ml={1}>Delete</RowText><Caret ml={8} /></Row>
                        <Row><FormatIcon /><RowText $ml={1}>Format</RowText><Caret ml={2} /></Row>
                    </Group>
                    <Group w={84} label="Editing" pad={7}>
                        <Row>
                            <Slot $w={18}><SigmaIcon /></Slot>
                            <Slot $w={18}><Caret /></Slot>
                            <Slot $w={22}><SortIcon /></Slot>
                            <Slot $w={10} $ml={2}><Caret /></Slot>
                        </Row>
                        <Row>
                            <Slot $w={18}><FillDown /></Slot>
                            <Slot $w={18}><Caret /></Slot>
                            <Slot $w={22}><FindIcon /></Slot>
                            <Slot $w={10} $ml={2}><Caret /></Slot>
                        </Row>
                        <Row>
                            <Slot $w={18}><EraserIcon /></Slot>
                            <Slot $w={18}><Caret /></Slot>
                        </Row>
                    </Group>
                    <GroupBody style={{ justifyContent: "flex-end" }}>
                        <GroupFoot><Slot $w={42} $h={14}><Chevron /></Slot></GroupFoot>
                    </GroupBody>
                </Ribbon>
                <FormulaBar>
                    <NameBox>F3<Caret /></NameBox>
                    <DotsSlot><DotsIcon /></DotsSlot>
                    <FxBox>
                        <Slot $w={40} $h={26}><CancelIcon /></Slot>
                        <Slot $w={40} $h={26}><CheckIcon /></Slot>
                        <Slot $w={38} $h={26}><FxText>fx</FxText></Slot>
                    </FxBox>
                    <FormulaInput>Total damage [million $]<Slot $w={16} $h={16}><Chevron dir="down" /></Slot></FormulaInput>
                </FormulaBar>
                <WorkArea>
                    <Sheet $rows={ROW_HEIGHTS.map((h) => `${h}px`).join(" ")}>
                        <Corner><CornerMark /></Corner>
                        {COLUMNS.map((c) => <ColHead key={c} $on={c === "F"}>{c}</ColHead>)}
                        {ROW_HEIGHTS.map((_, i) => (
                            <React.Fragment key={i}>
                                <RowHead $on={i === 2}>{i + 1}</RowHead>
                                {COLUMNS.map((c) => renderCell(c, i + 1))}
                            </React.Fragment>
                        ))}
                    </Sheet>
                    <VScroll>
                        <ScrollBtn><Arrow dir="up" /></ScrollBtn>
                        <VThumb />
                        <VTrack />
                        <ScrollBtn $h={15}><Arrow dir="down" /></ScrollBtn>
                    </VScroll>
                </WorkArea>
                <SheetBar>
                    <Slot $w={30} $h={16}><Arrow dir="left" color="#c4c4c4" /></Slot>
                    <Slot $w={30} $h={16}><Arrow dir="right" color="#c4c4c4" /></Slot>
                    <SheetTab>Sheet1</SheetTab>
                    <Slot $w={19} $h={19} $ml={35}><PlusCircle /></Slot>
                    <Slot $w={3} $h={14} $ml={327}><DotsIcon /></Slot>
                    <HScroll>
                        <ScrollBtn><Arrow dir="left" color="#555" /></ScrollBtn>
                        <HThumb />
                        <HTrack />
                        <ScrollBtn><Arrow dir="right" color="#777" /></ScrollBtn>
                    </HScroll>
                </SheetBar>
                <StatusBar>
                    READY
                    <StatusRight>
                        <ViewButton $w={40} $on><ViewGrid /></ViewButton>
                        <ViewButton $w={42}><ViewPage /></ViewButton>
                        <ViewButton $w={40}><ViewBreak /></ViewButton>
                        <ZoomSign $ml={8} $mr={5}>-</ZoomSign>
                        <ZoomTrack><ZoomThumb /></ZoomTrack>
                        <ZoomSign $ml={4} $mr={5}>+</ZoomSign>
                        <ZoomText>100%</ZoomText>
                    </StatusRight>
                </StatusBar>
                <Highlighter />
                <Pointer width="15" height="22" viewBox="0 0 15 22">
                    <path d="M1 1v16l4-3.500 3 7 3-1.300-3-6.700h5.500z" fill="#fff" stroke="#222" strokeWidth="1.200" />
                </Pointer>
            </Window>
        </Desktop>
    </Page>
);

export default App;
